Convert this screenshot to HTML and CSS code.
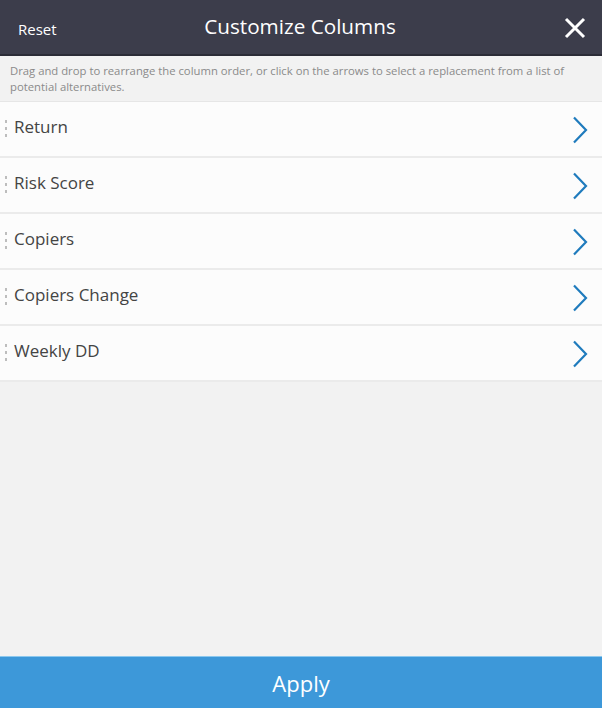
FILE: index.html
```html
<!DOCTYPE html>
<html lang="en">
<head>
    <meta charset="UTF-8">
    <meta name="viewport" content="width=device-width, initial-scale=1.0">
    <title>Customize Columns</title>
    <link rel="stylesheet" href="styles.css">
</head>
<body>
    <div class="panel">
        <div class="panel-header">
            <button class="reset-btn">Reset</button>
            <h1 class="panel-title">Customize Columns</h1>
            <button class="close-btn" aria-label="Close">
                <svg width="22" height="22" viewBox="0 0 22 22">
                    <path d="M2 2 L20 20 M20 2 L2 20" stroke="#fff" stroke-width="3" fill="none"/>
                </svg>
            </button>
        </div>
        <p class="hint">Drag and drop to rearrange the column order, or click on the arrows to select a replacement from a list of potential alternatives.</p>

        <ul class="column-list">
            <li class="column-row">
                <span class="handle"><i></i><i></i><i></i></span>
                <span class="column-name">Return</span>
                <svg class="chevron" width="16" height="28" viewBox="0 0 16 28"><path d="M2 1.5 L14 14 L2 26.5" stroke="#1f7bbd" stroke-width="2.2" fill="none"/></svg>
            </li>
            <li class="column-row">
                <span class="handle"><i></i><i></i><i></i></span>
                <span class="column-name">Risk Score</span>
                <svg class="chevron" width="16" height="28" viewBox="0 0 16 28"><path d="M2 1.5 L14 14 L2 26.5" stroke="#1f7bbd" stroke-width="2.2" fill="none"/></svg>
            </li>
            <li class="column-row">
                <span class="handle"><i></i><i></i><i></i></span>
                <span class="column-name">Copiers</span>
                <svg class="chevron" width="16" height="28" viewBox="0 0 16 28"><path d="M2 1.5 L14 14 L2 26.5" stroke="#1f7bbd" stroke-width="2.2" fill="none"/></svg>
            </li>
            <li class="column-row">
                <span class="handle"><i></i><i></i><i></i></span>
                <span class="column-name">Copiers Change</span>
                <svg class="chevron" width="16" height="28" viewBox="0 0 16 28"><path d="M2 1.5 L14 14 L2 26.5" stroke="#1f7bbd" stroke-width="2.2" fill="none"/></svg>
            </li>
            <li class="column-row">
                <span class="handle"><i></i><i></i><i></i></span>
                <span class="column-name">Weekly DD</span>
                <svg class="chevron" width="16" height="28" viewBox="0 0 16 28"><path d="M2 1.5 L14 14 L2 26.5" stroke="#1f7bbd" stroke-width="2.2" fill="none"/></svg>
            </li>
        </ul>

        <div class="spacer"></div>
        <button class="apply-btn">Apply</button>
    </div>
</body>
</html>
```

FILE: styles.css
```css
body{
    margin: 0;
    font-family: "Open Sans", "Noto Sans", sans-serif;
    background-color: #f2f2f2;
}
.panel{
    display: flex;
    flex-direction: column;
    height: 708px;
}
.panel-header{
    display: flex;
    align-items: center;
    justify-content: space-between;
    height: 54px;
    padding: 0 16px 0 18px;
    background-color: #3c3d4b;
    border-bottom: 2px solid #2b2c37;
}
.reset-btn{
    background: none;
    border: none;
    padding: 0;
    color: #fff;
    font-family: inherit;
    font-size: 15px;
    margin-top: 3px;
    width: 60px;
    text-align: left;
}
.panel-title{
    margin: 0 4px 0 0;
    color: #fff;
    font-size: 20.7px;
    font-weight: 400;
    margin-top: -2px;
}
.close-btn{
    background: none;
    border: none;
    padding: 0;
    width: 60px;
    height: 22px;
    display: flex;
    justify-content: flex-end;
    margin-top: 1px;
}
.hint{
    margin: 0;
    padding: 7px 10px 6px 10px;
    font-size: 11.3px;
    line-height: 16px;
    color: #8a8a8a;
    background-color: #f2f2f2;
    border-bottom: 1px solid #e6e6e6;
}
.column-list{
    list-style: none;
    margin: 0;
    padding: 0;
}
.column-row{
    display: flex;
    align-items: center;
    height: 54px;
    padding: 0 14px 0 5px;
    background-color: #fcfcfc;
    border-bottom: 2px solid #ebebeb;
}
.handle{
    display: flex;
    flex-direction: column;
    gap: 4px;
    width: 9px;
    margin-top: -2px;
}
.handle i{
    display: block;
    width: 2px;
    height: 3px;
    background-color: #bdbdbd;
}
.column-name{
    flex: 1;
    font-size: 17px;
    color: #444;
    margin-top: -5px;
}
.chevron{
    margin-top: 1px;
}
.spacer{
    flex: 1;
}
.apply-btn{
    height: 52px;
    border: none;
    border-top: 1px solid #8cc8ee;
    background-color: #3d98d9;
    color: #fff;
    font-family: inherit;
    font-size: 22px;
    padding: 0;
}
```
